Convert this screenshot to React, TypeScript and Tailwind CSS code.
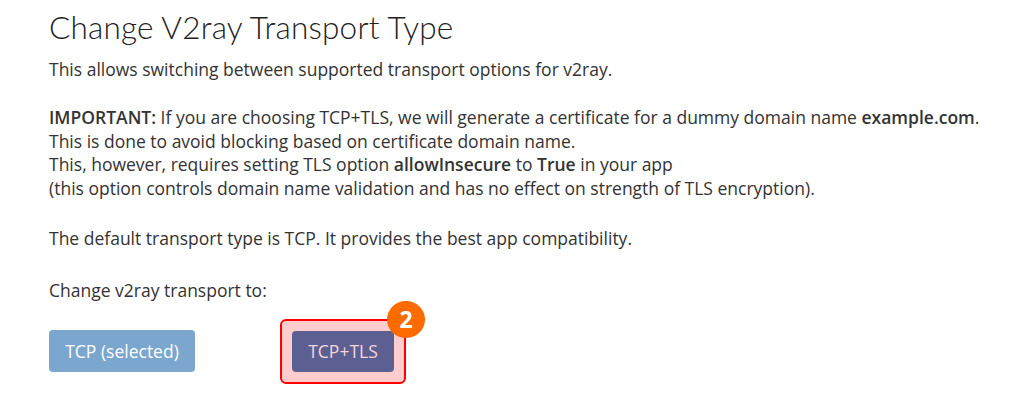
import React from 'react'

export default function App() {
  return (
    <div className="min-h-[413px] bg-white text-[#333] px-[49px] pt-[7px]" style={{ fontFamily: '"Open Sans", sans-serif' }}>
      <h1
        className="text-[31.5px] leading-[40px] font-light text-[#222] tracking-[0.2px]"
        style={{ fontFamily: 'Lato, sans-serif' }}
      >
        Change V2ray Transport Type
      </h1>

      <div className="text-[17.5px] leading-[23.4px] mt-[11px] whitespace-nowrap">
        <p>This allows switching between supported transport options for v2ray.</p>

        <p className="mt-[25px]">
          <b className="font-semibold">IMPORTANT:</b> If you are choosing TCP+TLS, we will generate a certificate for a dummy domain name{' '}
          <b className="font-semibold">example.com</b>.
          <br />
          This is done to avoid blocking based on certificate domain name.
          <br />
          This, however, requires setting TLS option <b className="font-semibold">allowInsecure</b> to{' '}
          <b className="font-semibold">True</b> in your app
          <br />
          (this option controls domain name validation and has no effect on strength of TLS encryption).
        </p>

        <p className="mt-[27px]">The default transport type is TCP. It provides the best app compatibility.</p>

        <p className="mt-[29px]">Change v2ray transport to:</p>
      </div>

      <div className="flex items-center mt-[16px]">
        <button className="w-[146px] h-[42px] rounded-[4px] bg-[#7ba7cf] text-white text-[17.5px]">
          TCP (selected)
        </button>

        <div className="relative ml-[85px] p-[10px] border-[2.5px] border-[#ff0000] bg-[#ffcdcd] rounded-[6px]">
          <button className="w-[102px] h-[41px] rounded-[4px] bg-[#5c5f91] text-[#f5d5dc] text-[17.5px] block">
            TCP+TLS
          </button>
          <span className="absolute -top-[20px] -right-[21px] w-[38px] h-[37px] rounded-full bg-[#fe6b00] text-white text-[23px] font-bold flex items-center justify-center leading-none">
            2
          </span>
        </div>
      </div>
    </div>
  )
}
